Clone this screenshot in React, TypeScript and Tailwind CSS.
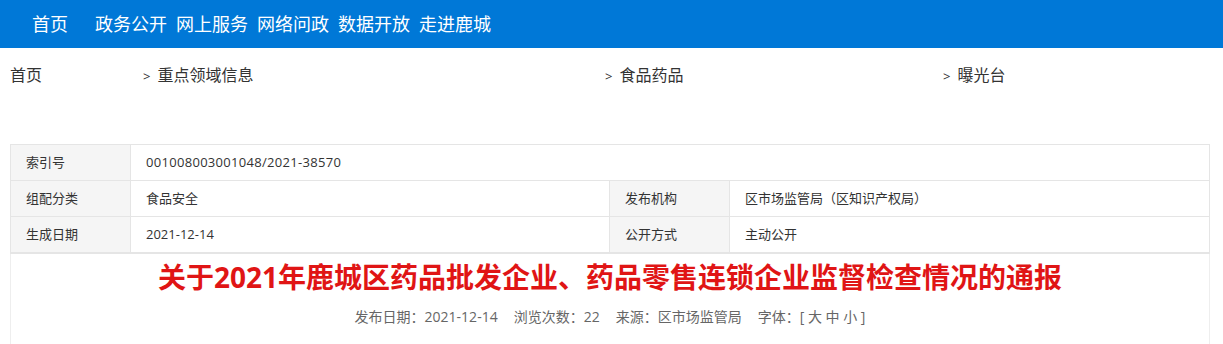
import React from "react";

const font = { fontFamily: '"Open Sans", "Noto Sans CJK SC", "Noto Sans", sans-serif' };

export default function App() {
  const nav = ["政务公开", "网上服务", "网络问政", "数据开放", "走进鹿城"];
  return (
    <div className="w-[1223px] h-[344px] overflow-hidden bg-white text-[#333]" style={font}>
      <div className="h-[48px] bg-[#0078d7] flex items-center pl-[32px] text-white text-[18px]">
        <span className="leading-none">首页</span>
        <div className="flex gap-[9px] ml-[27px]">
          {nav.map((n) => (
            <span key={n} className="leading-none">{n}</span>
          ))}
        </div>
      </div>
      <div className="flex pl-[10px] pt-[16px] h-[96px] text-[16px] leading-[22px] text-[#333]">
        <span className="w-[133px]">首页</span>
        <span className="w-[462px]"><span className="text-[13px] mr-[7px]">&gt;</span>重点领域信息</span>
        <span className="w-[338px]"><span className="text-[13px] mr-[7px]">&gt;</span>食品药品</span>
        <span><span className="text-[13px] mr-[7px]">&gt;</span>曝光台</span>
      </div>
      <div className="mx-[10px] w-[1200px]">
        <table className="w-full border-collapse text-[13px] table-fixed">
          <colgroup>
            <col className="w-[120px]" />
            <col className="w-[479px]" />
            <col className="w-[120px]" />
            <col />
          </colgroup>
          <tbody>
            <tr className="h-[36px]">
              <td className="border border-[#e5e5e5] bg-[#f5f5f5] pl-[15px]">索引号</td>
              <td colSpan={3} className="border border-[#e5e5e5] pl-[15px] tracking-[0.3px]">001008003001048/2021-38570</td>
            </tr>
            <tr className="h-[36px]">
              <td className="border border-[#e5e5e5] bg-[#f5f5f5] pl-[15px]">组配分类</td>
              <td className="border border-[#e5e5e5] pl-[15px]">食品安全</td>
              <td className="border border-[#e5e5e5] bg-[#f5f5f5] pl-[15px]">发布机构</td>
              <td className="border border-[#e5e5e5] pl-[15px]">区市场监管局（区知识产权局）</td>
            </tr>
            <tr className="h-[36px]">
              <td className="border border-[#e5e5e5] border-b-2 bg-[#f5f5f5] pl-[15px]">生成日期</td>
              <td className="border border-[#e5e5e5] border-b-2 pl-[15px]">2021-12-14</td>
              <td className="border border-[#e5e5e5] border-b-2 bg-[#f5f5f5] pl-[15px]">公开方式</td>
              <td className="border border-[#e5e5e5] border-b-2 pl-[15px]">主动公开</td>
            </tr>
          </tbody>
        </table>
        <div className="border-x border-[#eeeeee] h-[120px] pt-[3px]">
          <h1 className="text-center text-[28px] leading-[40px] font-bold text-[#e01515]">
            关于2021年鹿城区药品批发企业、药品零售连锁企业监督检查情况的通报
          </h1>
          <div className="flex justify-center gap-[16px] mt-[10px] text-[14px] leading-[20px] text-[#666]">
            <span>发布日期：2021-12-14</span>
            <span>浏览次数：22</span>
            <span>来源：区市场监管局</span>
            <span>字体：[ 大 中 小 ]</span>
          </div>
        </div>
      </div>
    </div>
  );
}
